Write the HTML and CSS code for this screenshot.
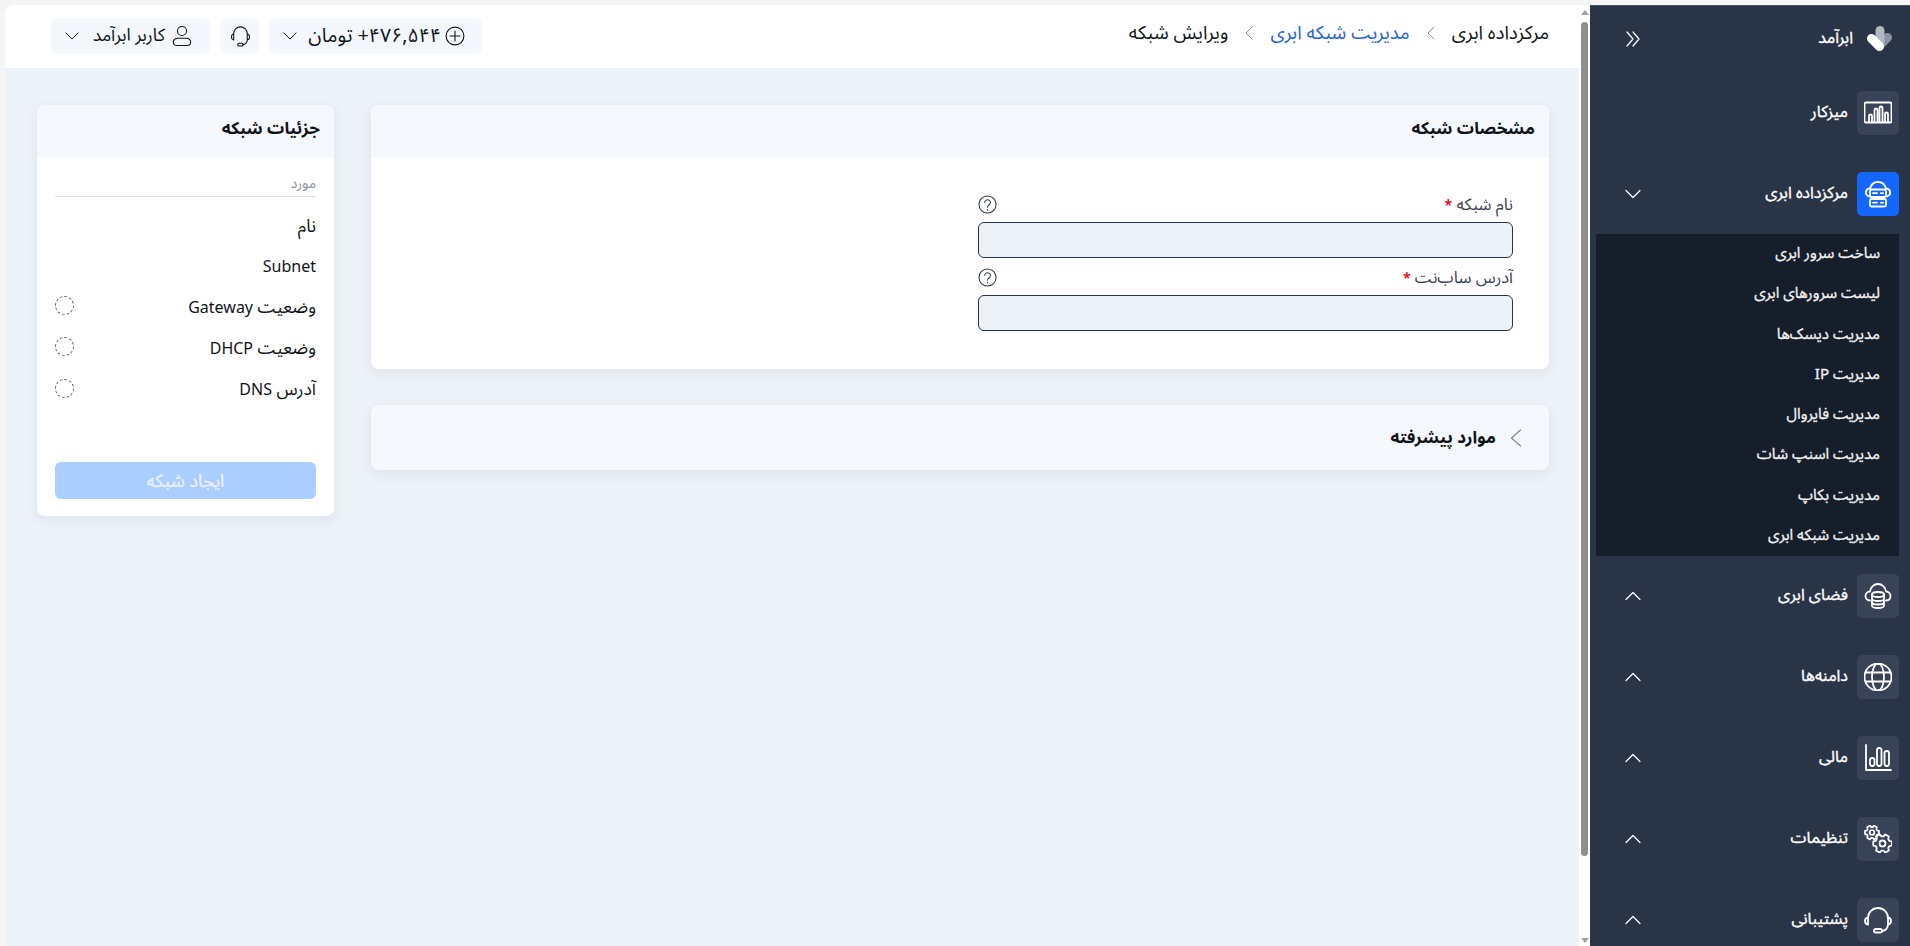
FILE: index.html
```html
<!DOCTYPE html>
<html lang="fa" dir="rtl">
<head>
<meta charset="utf-8">
<title>ویرایش شبکه</title>
<link rel="stylesheet" href="styles.css">
</head>
<body>
<div class="page">
  <aside class="sidebar">
    <div class="brand">
      <svg class="logo" viewBox="0 0 26 26"><path class="logo-c" d="M20.500 11.500l-6 6"/><path class="logo-b" d="M13 4.500v11"/><path class="logo-a" d="M4.500 12.500l8 8"/></svg>
      <span class="brand-name">ابرآمد</span>
      <svg class="chev double" viewBox="0 0 16 16"><path d="M8 1l6 7-6 7M2 1l6 7-6 7"/></svg>
    </div>
    <div class="menu-item">
      <span class="icon-box"><svg viewBox="0 0 28 28"><rect x="0.500" y="3.500" width="27" height="20" rx="1.500"/><path d="M5 23v-6a1.500 1.500 0 0 1 3 0v6M10.500 23V11a1.500 1.500 0 0 1 3 0v12M15.500 23V9a1.500 1.500 0 0 1 3 0v14M21 23v-8a1.500 1.500 0 0 1 3 0v8"/></svg></span>
      <span class="menu-label">میزکار</span>
    </div>
    <div class="menu-item">
      <span class="icon-box active"><svg viewBox="0 0 28 28"><path d="M5 16.500C2.500 15.500 1.500 13.500 2 11.500c.5-2 2-3 4-3C7 5 10 2 14 2s7 3 8 6.500c2 0 3.500 1 4 3 .5 2-.5 4-3 5"/><rect x="6" y="9.500" width="16" height="7.500" rx="1.500"/><rect x="6" y="19" width="16" height="7.500" rx="1.500"/><path d="M9 13.200h4M9 22.700h4M17 13.200h2M17 22.700h2"/></svg></span>
      <span class="menu-label">مرکزداده ابری</span>
      <svg class="chev" viewBox="0 0 16 16"><path d="M1 4.500l7 7 7-7"/></svg>
    </div>
    <ul class="submenu">
      <li>ساخت سرور ابری</li>
      <li>لیست سرورهای ابری</li>
      <li>مدیریت دیسک‌ها</li>
      <li>مدیریت IP</li>
      <li>مدیریت فایروال</li>
      <li>مدیریت اسنپ شات</li>
      <li>مدیریت بکاپ</li>
      <li>مدیریت شبکه ابری</li>
    </ul>
    <div class="menu-item">
      <span class="icon-box"><svg viewBox="0 0 28 28"><path d="M6 18.500c-3 0-4.500-2-4.500-4.500S3.500 9.500 6 9.500C6.500 5 10 2 14 2s7.500 3 8 7.500c2.500 0 4.500 2 4.500 4.500s-1.500 4.500-4.500 4.500"/><ellipse cx="14" cy="12.500" rx="6" ry="2.500"/><path d="M8 12.500v11c0 1.500 2.500 2.500 6 2.500s6-1 6-2.500v-11M8 16.500c0 1.500 2.500 2.500 6 2.500s6-1 6-2.500M8 20c0 1.500 2.500 2.500 6 2.500s6-1 6-2.500"/></svg></span>
      <span class="menu-label">فضای ابری</span>
      <svg class="chev" viewBox="0 0 16 16"><path d="M1 11.500l7-7 7 7"/></svg>
    </div>
    <div class="menu-item">
      <span class="icon-box"><svg viewBox="0 0 28 28"><circle cx="14" cy="14" r="13.500"/><ellipse cx="14" cy="14" rx="6" ry="13.500"/><path d="M1.500 9.500h25M1.500 18.500h25"/></svg></span>
      <span class="menu-label">دامنه‌ها</span>
      <svg class="chev" viewBox="0 0 16 16"><path d="M1 11.500l7-7 7 7"/></svg>
    </div>
    <div class="menu-item">
      <span class="icon-box"><svg viewBox="0 0 28 28"><path d="M2 1v25h25"/><rect x="6" y="14" width="4.500" height="8" rx="2.200"/><rect x="13" y="4" width="4.500" height="18" rx="2.200"/><rect x="20.500" y="7" width="4.500" height="15" rx="2.200"/></svg></span>
      <span class="menu-label">مالی</span>
      <svg class="chev" viewBox="0 0 16 16"><path d="M1 11.500l7-7 7 7"/></svg>
    </div>
    <div class="menu-item">
      <span class="icon-box"><svg viewBox="0 0 28 28"><defs><path id="gear" d="M7.050-2.850L9.740-2.250 9.740 2.250 7.050 2.850 5.990 4.680 6.820 7.310 2.920 9.560 1.060 7.530-1.060 7.530-2.920 9.560-6.820 7.310-5.990 4.680-7.050 2.850-9.740 2.250-9.740-2.250-7.050-2.850-5.990-4.680-6.820-7.310-2.920-9.560-1.060-7.530 1.060-7.530 2.920-9.560 6.820-7.310 5.990-4.680z"/></defs><use href="#gear" transform="translate(8 7.500) scale(.72)" stroke-width="2.400"/><circle cx="8" cy="7.500" r="2.300"/><use href="#gear" transform="translate(18.500 18.500) scale(.95)" stroke-width="1.800"/><circle cx="18.500" cy="18.500" r="3"/></svg></span>
      <span class="menu-label">تنظیمات</span>
      <svg class="chev" viewBox="0 0 16 16"><path d="M1 11.500l7-7 7 7"/></svg>
    </div>
    <div class="menu-item">
      <span class="icon-box"><svg viewBox="0 0 28 28"><path d="M4 13V12a10 10 0 0 1 20 0v1M4 11.500c-2 .3-3 1.700-3 3.500s1 3.200 3 3.500zM24 11.500c2 .3 3 1.700 3 3.500s-1 3.200-3 3.500zM24 18.500c0 4-3 6.500-6 6.500"/><rect x="10" y="23" width="8" height="3.500" rx="1.700"/></svg></span>
      <span class="menu-label">پشتیبانی</span>
      <svg class="chev" viewBox="0 0 16 16"><path d="M1 11.500l7-7 7 7"/></svg>
    </div>
  </aside>

  <div class="scrollbar">
    <span class="arrow up"></span>
    <span class="thumb"></span>
    <span class="arrow down"></span>
  </div>

  <div class="content">
    <header class="topbar">
      <nav class="crumbs">
        <span>مرکزداده ابری</span>
        <svg class="crumb-sep" viewBox="0 0 10 14"><path d="M8 1L2 7l6 6"/></svg>
        <span class="crumb-link">مدیریت شبکه ابری</span>
        <svg class="crumb-sep" viewBox="0 0 10 14"><path d="M8 1L2 7l6 6"/></svg>
        <span>ویرایش شبکه</span>
      </nav>
      <div class="tools">
        <div class="tool wallet">
          <svg class="tool-icon" viewBox="0 0 22 22"><circle cx="11" cy="11" r="9.800"/><path d="M11 5.500v11M5.500 11h11"/></svg>
          <span>۴۷۶,۵۴۴+ تومان</span>
          <svg class="tool-chev" viewBox="0 0 16 16"><path d="M1 4.500l7 7 7-7"/></svg>
        </div>
        <div class="tool headset">
          <svg class="tool-icon" viewBox="0 0 22 24"><path d="M4 11V9.500a7.500 7.500 0 0 1 15 0V11M4 9.500c-1.500.5-2.500 1.700-2.500 3.500S2.500 16 4 16.500zM19 9.500c1.500.5 2.500 1.700 2.500 3.500s-1 3-2.500 3.500zM19 16.500c0 3-2.500 5-4.500 5"/><rect x="8.500" y="20" width="6" height="3" rx="1.500"/></svg>
        </div>
        <div class="tool user">
          <svg class="tool-icon" viewBox="0 0 22 24"><circle cx="11" cy="6.500" r="5"/><path d="M1.500 19c0-3 2.500-4.500 5-4.500h9c2.500 0 5 1.500 5 4.500 0 2.500-1.500 3.500-4 3.500h-11c-2.500 0-4-1-4-3.500z"/></svg>
          <span>کاربر ابرآمد</span>
          <svg class="tool-chev" viewBox="0 0 16 16"><path d="M1 4.500l7 7 7-7"/></svg>
        </div>
      </div>
    </header>

    <main class="workspace">
      <div class="col-main">
        <section class="card">
          <h2 class="card-head">مشخصات شبکه</h2>
          <div class="form">
            <div class="field">
              <div class="field-top">
                <label>نام شبکه <b>*</b></label>
                <svg class="help" viewBox="0 0 20 20"><circle cx="10" cy="10" r="9"/><path d="M7 8a3 3 0 1 1 4.500 2.600c-1 .6-1.500 1.200-1.500 2.400M10 15v.8"/></svg>
              </div>
              <div class="input"></div>
            </div>
            <div class="field">
              <div class="field-top">
                <label>آدرس ساب‌نت <b>*</b></label>
                <svg class="help" viewBox="0 0 20 20"><circle cx="10" cy="10" r="9"/><path d="M7 8a3 3 0 1 1 4.500 2.600c-1 .6-1.500 1.200-1.500 2.400M10 15v.8"/></svg>
              </div>
              <div class="input"></div>
            </div>
          </div>
        </section>
        <section class="card advanced">
          <svg class="adv-chev" viewBox="0 0 12 18"><path d="M10.500 1L1.500 9l9 8"/></svg>
          <h2 class="adv-title">موارد پیشرفته</h2>
        </section>
      </div>

      <aside class="card details">
        <h2 class="card-head">جزئیات شبکه</h2>
        <div class="details-body">
          <div class="details-caption">مورد</div>
          <div class="detail-row first"><span>نام</span></div>
          <div class="detail-row"><span class="latin">Subnet</span></div>
          <div class="detail-row"><span>وضعیت <span class="latin">Gateway</span></span><i class="spinner"></i></div>
          <div class="detail-row"><span>وضعیت <span class="latin">DHCP</span></span><i class="spinner"></i></div>
          <div class="detail-row"><span>آدرس <span class="latin">DNS</span></span><i class="spinner"></i></div>
          <button class="submit" type="button">ایجاد شبکه</button>
        </div>
      </aside>
    </main>
  </div>
</div>
</body>
</html>
```

FILE: styles.css
```css
* { box-sizing: border-box; }
html, body { margin: 0; height: 100%; overflow: hidden; }
body {
  font-family: "Noto Sans", "Noto Sans Arabic", "Vazirmatn", "DejaVu Sans", sans-serif;
  font-size: 15px;
  color: #10131a;
  background: #f5f5f5;
}
svg { fill: none; stroke: currentColor; stroke-linecap: round; stroke-linejoin: round; display: block; }

.page { display: flex; height: 100vh; padding: 5px 0 0 5px; }

/* sidebar */
.sidebar {
  flex: 0 0 320px;
  background: #2a3447;
  color: #fff;
  padding: 20px 11px 0 0;
  overflow: hidden;
  border-top: 1px solid #4a5363;
}
.brand { display: flex; align-items: center; height: 26px; padding-right: 6px; margin-bottom: 39px; }
.logo { width: 26px; height: 26px; }
.logo path { stroke-width: 9; }
.logo-a { stroke: #fff; }
.logo-b { stroke: #b3b7bf; }
.logo-c { stroke: #8b919e; }
.brand-name { font-size: 16px; -webkit-text-stroke: .35px #fff; margin-right: 14px; flex: 1; margin-top: -3px; }
.chev { width: 16px; height: 16px; stroke-width: 1.2; margin-left: 35px; }
.chev.double { stroke-width: 1.2; }
.menu-item { display: flex; align-items: center; height: 44px; margin-bottom: 37px; }
.icon-box {
  flex: 0 0 42px; height: 44px; border-radius: 5px; background: #394358;
  display: flex; align-items: center; justify-content: center;
}
.icon-box svg { width: 28px; height: 28px; stroke-width: 1.8; }
.icon-box.active { background: #1366ff; }
.menu-label { flex: 1; margin-right: 9px; font-size: 16px; -webkit-text-stroke: .35px #fff; margin-top: -3px; }
.submenu {
  list-style: none; margin: -19px 0 18px 0; padding: 0 19px 0 0;
  background: #171e2b; width: 303px; font-size: 15.100px; -webkit-text-stroke: .3px #f2f3f5;
}
.submenu li { height: 40.250px; display: flex; align-items: center; color: #f2f3f5; padding-bottom: 2px; }

/* fake scrollbar */
.scrollbar {
  flex: 0 0 11px; background: #fff; display: flex; flex-direction: column;
  align-items: center; padding: 5px 0 3px;
}
.thumb { width: 7px; height: 834px; margin-top: 7px; border-radius: 4px; background: #8f8f8f; flex: none; }
.arrow { width: 0; height: 0; border: 4px solid transparent; flex: none; }
.arrow.up { border-top: 0; border-bottom: 5px solid #a3a3a3; }
.arrow.down { border-bottom: 0; border-top: 5px solid #a3a3a3; margin-top: auto; }

/* content */
.content { flex: 1; min-width: 0; background: #edf1f8; }
.topbar {
  height: 63px; background: #fff; border-top-left-radius: 8px;
  display: flex; align-items: center; justify-content: space-between;
  padding: 0 30px 0 46px;
}
.crumbs { display: flex; align-items: center; gap: 16px; font-size: 18.800px; margin-top: -8px; }
.crumb-link { color: #2563d9; }
.crumb-sep { width: 10px; height: 14px; stroke: #8a919e; stroke-width: 1; }
.tools { display: flex; gap: 10px; margin-top: -2px; }
.tool {
  display: flex; align-items: center; height: 36px; border-radius: 7px;
  background: #f4f7fb; font-size: 17.500px; padding: 0 14px;
}
.tool.wallet { width: 213px; padding-right: 17px; font-size: 19.500px; }
.tool.headset { width: 39px; padding: 0; justify-content: center; }
.tool.user { width: 159px; padding-right: 18px; }
.tool-icon { width: 20px; height: 22px; stroke-width: 1.2; flex: none; }
.tool span { margin-right: 4px; flex: 1; }
.tool.user span { margin-right: 7px; }
.tool-chev { width: 14px; height: 14px; stroke-width: 1.1; flex: none; }

.workspace { display: flex; align-items: flex-start; gap: 37px; padding: 37px 30px 0 32px; }
.col-main { flex: 1; min-width: 0; display: flex; flex-direction: column; gap: 36px; }
.card {
  background: #fff; border-radius: 8px; overflow: hidden;
  box-shadow: 0 4px 14px rgba(40, 60, 100, .07);
}
.card-head {
  margin: 0; height: 53px; background: #f5f8fc; padding: 0 14px 6px;
  display: flex; align-items: center; font-size: 17px; font-weight: 700;
}
.form { width: 571px; padding: 37px 36px 36px 0; display: flex; flex-direction: column; height: 211px; }
.field { display: flex; flex-direction: column; }
.field-top { display: flex; align-items: center; justify-content: space-between; height: 27px; padding-bottom: 8px; }
.field-top label { font-size: 16.500px; color: #3a4252; }
.field-top b { color: #d81f26; font-weight: 700; font-size: 14px; }
.help { width: 19px; height: 19px; stroke-width: 1.1; color: #2a3447; }
.input { height: 36px; border: 1px solid #2a3447; border-radius: 6px; background: #edf1f8; margin-bottom: 10px; }
.advanced {
  height: 65px; background: #f5f8fc; display: flex; align-items: center; padding: 0 27px; gap: 14px;
}
.adv-chev { width: 12px; height: 18px; stroke: #7c8494; stroke-width: 1.200; }
.adv-title { margin: 0; font-size: 17px; font-weight: 700; }

.details { flex: 0 0 297px; height: 411px; }
.details-body { padding: 18px; display: flex; flex-direction: column; }
.details-caption { height: 21px; border-bottom: 1px solid #d9dde4; font-size: 14px; line-height: 14px; color: #8b92a0; }
.detail-row { display: flex; align-items: center; justify-content: space-between; height: 41.400px; font-size: 17.500px; }
.detail-row.first { margin-top: 10px; height: 38px; }
.latin { font-size: 16px; }
.spinner { width: 19px; height: 19px; border: 1px dashed #555c69; border-radius: 50%; display: block; margin-top: -3px; }
.submit {
  margin-top: 51px; height: 37px; border: 0; border-radius: 6px; background: #abcdff; color: #e8f1ff;
  padding: 0 0 8px;
  font: 400 18px "Noto Sans", "Noto Sans Arabic", "Vazirmatn", "DejaVu Sans", sans-serif;
  -webkit-text-stroke: .3px #e8f1ff;
}
```
